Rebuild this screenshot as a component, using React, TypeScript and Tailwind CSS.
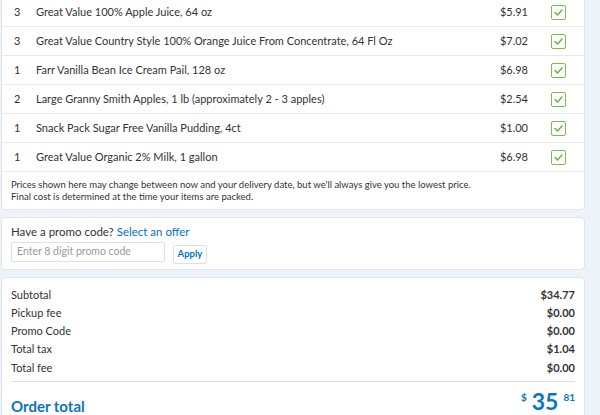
import React from "react";

const items = [
  { q: 3, name: "Great Value 100% Apple Juice, 64 oz", price: "$5.91" },
  { q: 3, name: "Great Value Country Style 100% Orange Juice From Concentrate, 64 Fl Oz", price: "$7.02" },
  { q: 1, name: "Farr Vanilla Bean Ice Cream Pail, 128 oz", price: "$6.98" },
  { q: 2, name: "Large Granny Smith Apples, 1 lb (approximately 2 - 3 apples)", price: "$2.54" },
  { q: 1, name: "Snack Pack Sugar Free Vanilla Pudding, 4ct", price: "$1.00" },
  { q: 1, name: "Great Value Organic 2% Milk, 1 gallon", price: "$6.98" },
];

function Check() {
  return (
    <div className="w-[15px] h-[15px] rounded-[2px] border border-[#7dbb4f] bg-white flex items-center justify-center">
      <svg width="9" height="7" viewBox="0 0 9 7" fill="none">
        <path d="M1 3.5 L3.5 6 L8 1" stroke="#6bb33f" strokeWidth="1.5" strokeLinecap="round" strokeLinejoin="round" />
      </svg>
    </div>
  );
}

const summary = [
  ["Subtotal", "$34.77"],
  ["Pickup fee", "$0.00"],
  ["Promo Code", "$0.00"],
  ["Total tax", "$1.04"],
  ["Total fee", "$0.00"],
];

export default function App() {
  return (
    <div
      className="w-[600px] h-[415px] overflow-hidden bg-[#eef3fa] text-[#333]"
      style={{ fontFamily: "Lato, 'Open Sans', sans-serif" }}
    >
      <div className="w-[584px] ml-[1px] flex flex-col gap-[7px] mt-[-2px]">
        <div className="bg-white border border-[#dfe5ee] border-t-0 rounded-b-[4px]">
          {items.map((it, i) => (
            <div key={i} className="h-[29px] flex items-center border-b border-[#e6e9ee] text-[11px]">
              <div className="w-[34px] pl-[12px]">{it.q}</div>
              <div className="flex-1">{it.name}</div>
              <div className="w-[60px] text-right pr-[2px]">{it.price}</div>
              <div className="w-[54px] flex justify-center pl-[2px]">
                <Check />
              </div>
            </div>
          ))}
          <div className="px-[9px] pt-[7px] pb-[6px] text-[9.5px] leading-[12px] text-[#333]">
            <div>Prices shown here may change between now and your delivery date, but we'll always give you the lowest price.</div>
            <div>Final cost is determined at the time your items are packed.</div>
          </div>
        </div>
        <div className="bg-white border border-[#dfe5ee] rounded-[4px] h-[53px] px-[9px] pt-[7px]">
          <div className="text-[11.5px] leading-[14px]">
            Have a promo code? <span className="text-[#0071ce]">Select an offer</span>
          </div>
          <div className="flex items-start gap-[8px] mt-[3px]">
            <div className="w-[154px] h-[20px] border border-[#dcdfe3] rounded-[2px] flex items-center px-[5px] text-[10.5px] text-[#9a9a9a]">
              Enter 8 digit promo code
            </div>
            <div className="w-[34px] h-[19px] border border-[#dcdfe3] rounded-[2px] flex items-center justify-center text-[9.5px] font-bold text-[#0071ce] mt-[3px]">
              Apply
            </div>
          </div>
        </div>
        <div className="bg-white border border-[#dfe5ee] rounded-[4px] px-[9px] pt-[8px] h-[160px]">
          {summary.map(([l, v]) => (
            <div key={l} className="flex justify-between h-[18.2px] items-center text-[11px]">
              <span>{l}</span>
              <span className="font-bold">{v}</span>
            </div>
          ))}
          <div className="border-t border-[#dcdfe3] mt-[4px]" />
          <div className="flex justify-between items-start mt-[8px]">
            <span className="text-[15px] font-bold text-[#0a74c4] mt-[5px]">Order total</span>
            <span className="flex items-start text-[#0a74c4] font-bold">
              <span className="text-[10px] leading-[12px] mt-[1px] mr-[5px]">$</span>
              <span className="text-[23px] leading-[22px]">35</span>
              <span className="text-[10px] leading-[12px] mt-[1px] ml-[5px]">81</span>
            </span>
          </div>
        </div>
      </div>
    </div>
  );
}
